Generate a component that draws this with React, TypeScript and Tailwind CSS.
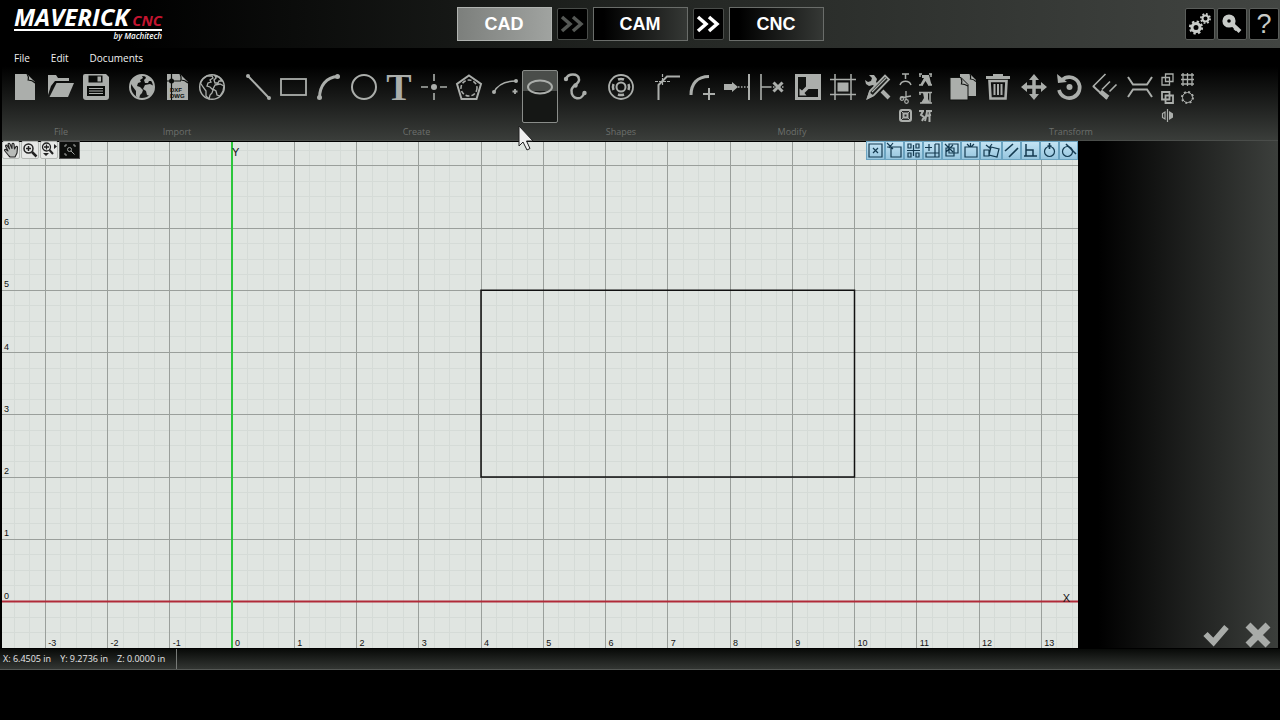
import type { ReactNode } from "react";

const UNIT = 62.25;
const ORIGIN = { x: 230, y: 459.5 };

const range = (from: number, to: number) => Array.from({ length: to - from + 1 }, (_, i) => from + i);
const toX = (units: number) => ORIGIN.x + units * UNIT;
const toY = (units: number) => ORIGIN.y - units * UNIT;

type Tool = { name: string; icon: ReactNode; active?: boolean };
type Group = { label: string; width: string; tools: Tool[]; small?: Tool[] };

function Glyph({ children, size = 26 }: { children: ReactNode; size?: number }) {
    return (
        <svg
            width={size}
            height={size}
            viewBox={`0 0 ${size} ${size}`}
            fill="none"
            stroke="currentColor"
            strokeWidth="2"
            className="shrink-0 overflow-visible"
            aria-hidden="true"
        >
            {children}
        </svg>
    );
}

const solid = { fill: "currentColor", stroke: "none" };

const continents =
    "M4 5l4-3 5 0 1 2-3 2 1 2-3 1-1 3 3 1 3 3-1 3-2 2-1 4-3-3v-5L4 13 1.500 9zM16 2l4 1 3 4-3 0-1 2-3 0-1-3 2-2zM16 11l5-1 4 2-1 5-3 5-3-1-1-4-3-2z";

const fileTools: Tool[] = [
    {
        name: "New",
        icon: (
            <Glyph>
                <path {...solid} d="M2 0h12l8 8v18H2z" />
                <path d="M14 0c1.500 2 1.800 4 1.200 6 2.500 0 4.800.8 7 3" stroke="#0a0c0a" strokeWidth="1.200" />
            </Glyph>
        ),
    },
    {
        name: "Open",
        icon: (
            <Glyph>
                <path {...solid} d="M0 1h8l2 3h11v3H7L3 12 0 21z" />
                <path {...solid} d="M8.500 9H26L20 23H1.500z" />
            </Glyph>
        ),
    },
    {
        name: "Save",
        icon: (
            <Glyph>
                <path {...solid} d="M2 0h21l3 3v20q0 3-3 3H3q-3 0-3-3V2q0-2 2-2z" />
                <path d="M5.500 1.500h14v7h-14z" fill="#0a0c0a" stroke="none" />
                <path {...solid} d="M14.500 2.500h3.500v5h-3.500z" />
                <path d="M4 12h18v10H4z" fill="#0a0c0a" stroke="none" />
                <path d="M6 14.500h14M6 17h14M6 19.500h14" strokeWidth="1.200" />
            </Glyph>
        ),
    },
];

const importTools: Tool[] = [
    {
        name: "Import from web",
        icon: (
            <Glyph>
                <circle cx="13" cy="13" r="12" />
                <path {...solid} d={continents} />
            </Glyph>
        ),
    },
    {
        name: "Import DXF or DWG",
        icon: (
            <Glyph>
                <path {...solid} d="M3 0h13l8 8v18H3z" />
                <path d="M16 0c1 2 1.500 4 1 6 2.500 0 5 1 7 3M7.500 0v26M3 7h14" stroke="#0a0c0a" strokeWidth="1.200" />
                <circle cx="7.500" cy="7" r="2.500" fill="#0a0c0a" stroke="none" />
                <g fill="#0a0c0a" stroke="none" fontFamily="Liberation Sans, sans-serif" fontWeight="700" fontSize="6">
                    <text x="6" y="18">DXF</text>
                    <text x="6" y="24">DWG</text>
                </g>
            </Glyph>
        ),
    },
    {
        name: "Import map",
        icon: (
            <Glyph>
                <circle cx="13" cy="13" r="12.300" strokeWidth="1.500" />
                <path d={continents} strokeWidth="1.300" />
            </Glyph>
        ),
    },
];

const createTools: Tool[] = [
    {
        name: "Line",
        icon: (
            <Glyph>
                <path d="M3 2l21 22" />
                <circle {...solid} cx="3" cy="2" r="2" />
                <circle {...solid} cx="24" cy="24" r="2" />
            </Glyph>
        ),
    },
    {
        name: "Rectangle",
        icon: (
            <Glyph>
                <rect x="1" y="5" width="25" height="16" strokeWidth="1.800" />
            </Glyph>
        ),
    },
    {
        name: "Arc",
        icon: (
            <Glyph>
                <path d="M4.500 24C4.500 12 11 3 23 2.500" strokeWidth="3" />
                <circle {...solid} cx="4.500" cy="23.500" r="2.500" />
                <circle {...solid} cx="22.500" cy="2.500" r="2.500" />
            </Glyph>
        ),
    },
    {
        name: "Circle",
        icon: (
            <Glyph>
                <circle cx="13" cy="13" r="12" />
            </Glyph>
        ),
    },
    {
        name: "Text",
        icon: <span className="flex h-[26px] items-center font-['Liberation_Serif',serif] text-[38px] leading-[38px] font-bold">T</span>,
    },
    {
        name: "Point",
        icon: (
            <Glyph>
                <circle {...solid} cx="13" cy="13" r="3" />
                <path d="M13 0v7M13 19v7M0 13h7M19 13h7" strokeWidth="1.600" />
            </Glyph>
        ),
    },
    {
        name: "Polygon",
        icon: (
            <Glyph>
                <path d="M13 1.500L25 10l-4.500 15h-15L1 10z" />
                <circle cx="13" cy="14" r="8" strokeWidth="1.500" strokeDasharray="4 2" />
            </Glyph>
        ),
    },
    {
        name: "Three point arc",
        icon: (
            <Glyph>
                <path d="M2 18C6 10 14 7 24 7" strokeWidth="1.500" />
                <circle {...solid} cx="2" cy="18" r="2" />
                <circle {...solid} cx="24" cy="7" r="2" />
                <path d="M23 15v5M20.500 17.500h5" strokeWidth="1.800" />
            </Glyph>
        ),
    },
    {
        name: "Ellipse",
        active: true,
        icon: (
            <Glyph>
                <ellipse cx="13" cy="13" rx="12" ry="6.500" />
            </Glyph>
        ),
    },
    {
        name: "Spline",
        icon: (
            <Glyph>
                <path d="M4 5C6-1 16-1 17 5c1 5-7 6-7.500 11C9 26 20 27 22 19" strokeWidth="2.500" />
                <circle {...solid} cx="4" cy="5" r="2.200" />
                <circle {...solid} cx="13.500" cy="11.500" r="2.200" />
                <circle {...solid} cx="22.500" cy="19" r="2.200" />
            </Glyph>
        ),
    },
];

const shapeTools: Tool[] = [
    {
        name: "Shape library",
        icon: (
            <Glyph>
                <circle cx="13" cy="13" r="12" strokeWidth="1.800" />
                <circle cx="13" cy="13" r="4.500" />
                <path
                    d="M10 5.500a8 8 0 0 1 6 0M10 20.500a8 8 0 0 0 6 0M5.500 10a8 8 0 0 0 0 6M20.500 10a8 8 0 0 1 0 6"
                    strokeWidth="2.500"
                />
            </Glyph>
        ),
    },
];

const modifyTools: Tool[] = [
    {
        name: "Chamfer",
        icon: (
            <Glyph>
                <path d="M26 2.500H13L4.500 11v15" />
                <path d="M8.500 0v11M1 7.500h15" strokeWidth="1.200" strokeDasharray="3 1" />
            </Glyph>
        ),
    },
    {
        name: "Fillet",
        icon: (
            <Glyph>
                <path d="M2 21C2 10 8 2.500 20 2.500" strokeWidth="3" />
                <path d="M20 14v12M14 20h12" />
            </Glyph>
        ),
    },
    {
        name: "Extend",
        icon: (
            <Glyph>
                <path {...solid} d="M0 10h8V8l6 5-6 5v-2H0z" />
                <path d="M14 13h10" strokeDasharray="1.500 1.500" strokeWidth="1.500" />
                <path d="M25 0v26" />
            </Glyph>
        ),
    },
    {
        name: "Trim",
        icon: (
            <Glyph>
                <path d="M2 0v26M2 13h9" strokeWidth="1.600" />
                <path d="M14.500 8.500l9 9M23.500 8.500l-9 9" strokeWidth="3" />
                <path d="M11 13h15" strokeDasharray="1.500 1.500" strokeWidth="1.500" />
            </Glyph>
        ),
    },
    {
        name: "Scale",
        icon: (
            <Glyph>
                <path {...solid} d="M0 0h26v26H0z" />
                <path d="M3 3h8v12h12v8H3z" fill="#111311" stroke="none" />
                <path {...solid} d="M4.500 21.500v-7l2.500 2 4-4 2.500 2.500-4 4 2 2.500z" />
            </Glyph>
        ),
    },
    {
        name: "Trim to region",
        icon: (
            <Glyph>
                <path d="M5 0v26M21 0v26M0 5.500h26M0 20.500h26" strokeWidth="1.500" />
                <path {...solid} d="M7.500 8.500h11v9h-11z" />
            </Glyph>
        ),
    },
    {
        name: "Edit geometry",
        icon: (
            <Glyph>
                <path {...solid} d="M0 6l3 2 3-1 1-3-3-3 5 0 3 4-1 3 3 3-3 3-3-3-4 1-3-2z" />
                <path d="M17 17l7 7" strokeWidth="4" />
                <path d="M3 24l2-7L20 1.500l4 4L9 21z" fill="#1a1c1a" strokeWidth="1.800" />
                <path d="M7 18L21 4" strokeWidth="1.200" />
                <path {...solid} d="M1 26l3-8 5 4z" />
            </Glyph>
        ),
    },
];

const modifySmall: Tool[] = [
    {
        name: "Break",
        icon: (
            <Glyph size={13}>
                <path d="M3 1h7M6.500 1v5M1 12c2-5 9-5 11 0" strokeWidth="1.500" />
            </Glyph>
        ),
    },
    {
        name: "Text on path",
        icon: (
            <Glyph size={13}>
                <path d="M0 1h3M10 1h3M0 12h4M9 12h4M1 1v3M12 1v3" strokeWidth="1.500" />
                <path {...solid} d="M3 2h7l2 8 1 2H9L6.500 8 4 12H1l4-7H3z" />
            </Glyph>
        ),
    },
    {
        name: "Cut",
        icon: (
            <Glyph size={13}>
                <path d="M7 0v9M1 7l11-2" strokeWidth="1.300" />
                <circle cx="3" cy="7.500" r="1.800" strokeWidth="1.200" />
                <circle cx="7.500" cy="10.500" r="1.800" strokeWidth="1.200" />
            </Glyph>
        ),
    },
    {
        name: "Text to outline",
        icon: (
            <Glyph size={13}>
                <path d="M0 1.500h13M1 1v3M11 1v11M1 12h12" strokeWidth="1.500" />
                <path {...solid} d="M4 2h5v6l2 4H2l3-5z" />
            </Glyph>
        ),
    },
    {
        name: "Offset",
        icon: (
            <Glyph size={13}>
                <rect x="1" y="1" width="11" height="11" rx="2" />
                <rect x="4.500" y="4.500" width="4" height="4" />
                <path d="M1 1l3 3M12 1L9 4M1 12l3-3M12 12L9 9" strokeWidth="1" />
            </Glyph>
        ),
    },
    {
        name: "Split text",
        icon: (
            <Glyph size={13}>
                <path d="M0 2h5M7 2h6M4 2l-2 4 3 2-2 4M8 3L6 12M10.500 3v10M7 7l5-1" />
            </Glyph>
        ),
    },
];

const transformTools: Tool[] = [
    {
        name: "Copy",
        icon: (
            <Glyph>
                <path {...solid} d="M10 0h10l6 6v16H10z" />
                <path d="M20 0c1 2 1 3 .5 5 2 0 4 1 5.500 2.500" stroke="#111311" strokeWidth="1.200" />
                <path d="M0 3.500h11l7 7V26H0z" fill="currentColor" stroke="#111311" strokeWidth="1" />
                <path d="M11 4c1 2 1 4 .5 6 2 0 4 .5 6.500 2" stroke="#111311" strokeWidth="1.200" />
            </Glyph>
        ),
    },
    {
        name: "Delete",
        icon: (
            <Glyph>
                <path d="M1 3.500h24" strokeWidth="3" />
                <path d="M9 2V1h8v1" />
                <path d="M4.500 7l1 17.500h15L21.500 7z" strokeWidth="2.600" />
                <path d="M9.500 10v11M13 10v11M16.500 10v11" />
            </Glyph>
        ),
    },
    {
        name: "Move",
        icon: (
            <Glyph>
                <path d="M13 3v20M3 13h20" strokeWidth="3.500" />
                <path {...solid} d="M13 0l5 6H8zM13 26l5-6H8zM0 13l6-5v10zM26 13l-6-5v10z" />
            </Glyph>
        ),
    },
    {
        name: "Rotate",
        icon: (
            <Glyph>
                <path d="M6 6A10.500 10.500 0 1 1 3 16" strokeWidth="3.600" />
                <path {...solid} d="M1 0l1 9 9-1z" />
                <circle {...solid} cx="13.500" cy="13" r="3" />
            </Glyph>
        ),
    },
    {
        name: "Align",
        icon: (
            <Glyph>
                <path d="M1 12.500L13.500 0M10 15.500l8-8M17.500 17.500l7-7" strokeWidth="1.600" />
                <path d="M1 12l14 13" strokeWidth="2" />
                <path d="M8.500 17.500l7.500 6" strokeWidth="4.500" />
            </Glyph>
        ),
    },
    {
        name: "Mirror",
        icon: (
            <Glyph>
                <path d="M1 3l5 7.500h14L25 3M1 23l5-7.500h14l5 7.500" />
            </Glyph>
        ),
    },
];

const transformSmall: Tool[] = [
    {
        name: "Group",
        icon: (
            <Glyph size={13}>
                <path d="M4.500 1h7.500v7.500H4.500zM1 4.500h7.500V12H1z" strokeWidth="1.300" />
            </Glyph>
        ),
    },
    {
        name: "Grid array",
        icon: (
            <Glyph size={13}>
                <path d="M0 2h13M0 6.500h13M0 11h13M2 0v13M6.500 0v13M11 0v13" strokeWidth="1.300" />
            </Glyph>
        ),
    },
    {
        name: "Ungroup",
        icon: (
            <Glyph size={13}>
                <path d="M4.500 4.500H12V12H4.500zM1 1h7.500v7.500H1z" strokeWidth="1.800" />
            </Glyph>
        ),
    },
    {
        name: "Circular array",
        icon: (
            <Glyph size={13}>
                <circle cx="6.500" cy="6.500" r="5" strokeWidth="1" />
                <circle cx="6.500" cy="6.500" r="5.500" strokeWidth="2" strokeDasharray="2 2.320" />
            </Glyph>
        ),
    },
    {
        name: "Flip",
        icon: (
            <Glyph size={13}>
                <path d="M6.500 0v13M4 3v7L1.500 8.500v-4z" strokeWidth="1.200" />
                <path {...solid} d="M8 2l4 2.500v4L8 11z" />
            </Glyph>
        ),
    },
];

const groups: Group[] = [
    { label: "File", width: "w-[106px]", tools: fileTools },
    { label: "Import", width: "w-[106px]", tools: importTools },
    { label: "Create", width: "w-[353px]", tools: createTools },
    { label: "Shapes", width: "w-[36px]", tools: shapeTools },
    { label: "Modify", width: "w-[286px]", tools: modifyTools, small: modifySmall },
    { label: "Transform", width: "w-[252px]", tools: transformTools, small: transformSmall },
];

const snaps: Tool[] = [
    { name: "Snap to center", icon: <path d="M2 2h13v13H2zM6 6l5 5M11 6l-5 5" /> },
    { name: "Snap to corner", icon: <path d="M5 5h10v10H5zM1 1l6 6M7 1L3 6M1 5h4" /> },
    { name: "Snap to grid", icon: <path d="M3 2h3v4H3zM11 2h3v4h-3zM3 11h3v4H3zM11 11h3v4h-3zM8.500 3v11M2 8.500h13" /> },
    { name: "Snap to endpoint", icon: <path d="M5 2v7M1 5.500h7M11 2h4v13H2v-4h13M11 2v13" /> },
    { name: "Snap to intersection", icon: <path d="M6 2h9v9H6zM3 6h8v8H3zM2 2l8 8M10 3l-7 7" /> },
    { name: "Snap to midpoint", icon: <path d="M3 5h12v10H3zM5 2l3 3M12 2L9 5M8.500 1v4" /> },
    { name: "Snap to object", icon: <path d="M1 8h5v6H1zM8 5l8 2-2 8-8-2zM3 3l5 4M9 2L6 6" /> },
    { name: "Snap parallel", icon: <path d="M2 9l8-7M6 15l9-9" strokeWidth="1.600" /> },
    { name: "Snap perpendicular", icon: <path d="M4 2v12M2 14h13M4 8h7v6" strokeWidth="1.500" /> },
    {
        name: "Snap to quadrant",
        icon: (
            <>
                <circle cx="8.500" cy="9.500" r="5" />
                <path d="M8.500 1v6M6.500 4h4" strokeWidth="1.600" />
            </>
        ),
    },
    {
        name: "Snap tangent",
        icon: (
            <>
                <circle cx="7.500" cy="9.500" r="5" />
                <path d="M6 2l10 10" strokeWidth="1.500" />
            </>
        ),
    },
];

function StageArrow({ label, className }: { label: string; className: string }) {
    return (
        <button
            aria-label={label}
            className={`flex h-8 w-[31px] items-center justify-center rounded-xs border border-[#4a4d4a] bg-black ${className}`}
        >
            <svg width="24" height="20" viewBox="0 0 24 20" fill="none" stroke="currentColor" strokeWidth="3.500" aria-hidden="true">
                <path d="M2 3l8 7-8 7M13 3l8 7-8 7" />
            </svg>
        </button>
    );
}

function StageButton({ label, active }: { label: string; active?: boolean }) {
    return (
        <button
            className={`h-[34px] w-[95px] border text-lg font-bold text-white ${
                active
                    ? "border-[#b0b3b0] bg-linear-to-r/srgb from-[#7c7f7c] to-[#a0a3a0]"
                    : "border-[#6a6d6a] bg-linear-to-r/srgb from-black from-10% to-[#353835]"
            }`}
        >
            {label}
        </button>
    );
}

function HeaderBar() {
    const square = "flex h-8 w-[30px] items-center justify-center rounded-xs border border-[#5a5d5a] bg-black";
    return (
        <header className="grid h-12 grid-cols-[1fr_auto_1fr] items-center bg-linear-to-r/srgb from-black from-10% via-[#222522] via-50% to-[#424542]">
            <div className="ml-3.5 w-[148px] self-start pt-1.5 font-['Open_Sans',sans-serif] italic">
                <div className="flex h-[25px] items-baseline justify-between border-b-2 border-white font-bold whitespace-nowrap">
                    <span className="text-2xl leading-[22px] text-white">MAVERICK</span>
                    <span className="text-[15px] leading-[22px] text-[#c41530]">CNC</span>
                </div>
                <div className="text-right text-[8px] leading-[10px] font-semibold text-white">by Machitech</div>
            </div>
            <nav className="flex items-center gap-[5px]" aria-label="Stages">
                <StageButton label="CAD" active />
                <StageArrow label="CAD to CAM" className="text-[#555855]" />
                <StageButton label="CAM" />
                <StageArrow label="CAM to CNC" className="text-white" />
                <StageButton label="CNC" />
            </nav>
            <div className="flex justify-end gap-0.5 pr-px text-[#c8cbc8]">
                <button aria-label="Settings" className={square}>
                    <svg width="24" height="24" viewBox="0 0 24 24" fill="none" stroke="currentColor" aria-hidden="true">
                        <circle cx="8" cy="15.500" r="4" strokeWidth="3" />
                        <circle cx="8" cy="15.500" r="6" strokeWidth="2.200" strokeDasharray="2.350 2.350" />
                        <circle cx="17.500" cy="6.500" r="3" strokeWidth="2" />
                        <circle cx="17.500" cy="6.500" r="4.600" strokeWidth="1.800" strokeDasharray="1.800 1.800" />
                    </svg>
                </button>
                <button aria-label="License" className={square}>
                    <svg width="22" height="22" viewBox="0 0 22 22" fill="none" stroke="currentColor" aria-hidden="true">
                        <circle cx="8" cy="8" r="4.200" strokeWidth="4.800" />
                        <path d="M11 11l8 7.500" strokeWidth="4" />
                        <path d="M13.500 17l3-3" strokeWidth="3" />
                    </svg>
                </button>
                <button aria-label="Help" className={`${square} text-[27px] leading-7`}>
                    ?
                </button>
            </div>
        </header>
    );
}

function Ribbon() {
    return (
        <div className="mx-0.5 border-b border-[#4a4d4a] bg-linear-to-b/srgb from-black from-20% to-[#3a3d3a] font-['Open_Sans',sans-serif]">
            <div className="flex h-[22px] items-start gap-[21px] pl-3 text-[10px] leading-5 text-[#f0f0f0]">
                <button>File</button>
                <button>Edit</button>
                <button>Documents</button>
            </div>
            <div className="flex gap-2.5 pl-1.5 text-[#abaeab]">
                {groups.map((group) => (
                    <section key={group.label} className={`${group.width} shrink-0`}>
                        <div className="flex h-[53px]">
                            {group.tools.map((tool) => (
                                <button
                                    key={tool.name}
                                    aria-label={tool.name}
                                    aria-pressed={tool.active}
                                    className={`flex h-[53px] min-w-0 flex-1 items-start justify-center rounded-xs border pt-[3px] ${
                                        tool.active
                                            ? "border-[#8a8d8a] bg-linear-to-b/srgb from-[#4a4d4a] from-40% to-[#151715] to-40%"
                                            : "border-transparent"
                                    }`}
                                >
                                    {tool.icon}
                                </button>
                            ))}
                            {group.small && (
                                <div className="grid w-[39px] grid-cols-2 content-start">
                                    {group.small.map((tool) => (
                                        <button
                                            key={tool.name}
                                            aria-label={tool.name}
                                            className="flex h-[18px] items-center justify-center"
                                        >
                                            {tool.icon}
                                        </button>
                                    ))}
                                </div>
                            )}
                        </div>
                        <h2 className="text-center text-[9px] leading-[17px] text-[#6c6f6c]">{group.label}</h2>
                    </section>
                ))}
            </div>
        </div>
    );
}

function ViewTools() {
    const light = "flex h-[18px] w-[18px] items-center justify-center rounded-xs border border-[#b5b8b5] bg-[#e6e8e6] text-[#222]";
    return (
        <div className="absolute top-0 left-0 flex gap-px">
            <button aria-label="Pan" className={light}>
                <svg width="16" height="16" viewBox="0 0 16 16" fill="#b8bbb8" stroke="currentColor" strokeWidth="1.100" strokeLinejoin="round" aria-hidden="true">
                    <path d="M6 14L1.500 8.500q0-1.500 1.500-1L5 9 2.500 4q.5-1.500 1.500-.5L6.500 7 5 2q1-1.500 2 0l2 4.500L9 2q1-1.300 2 0l.5 5L13 4.500q1.500-.5 1.500 1L14 11l-2 4H7z" />
                </svg>
            </button>
            <button aria-label="Zoom" className={light}>
                <svg width="16" height="16" viewBox="0 0 16 16" fill="none" stroke="currentColor" strokeWidth="1.500" aria-hidden="true">
                    <circle cx="6.500" cy="6.500" r="4.500" />
                    <path d="M4 6.500h5M6.500 4v5" />
                    <path d="M10 10l4.500 4.500" strokeWidth="2.500" />
                </svg>
            </button>
            <button aria-label="Zoom window" className={light}>
                <svg width="16" height="16" viewBox="0 0 16 16" fill="none" stroke="currentColor" strokeWidth="1.300" aria-hidden="true">
                    <circle cx="5.500" cy="5" r="4" />
                    <path d="M3 5h5M5.500 2.500v5" />
                    <path d="M8.500 8l3.500 4" strokeWidth="2" />
                    <path d="M13 2l3 2.500-3 2.500zM2 11h6l-3 3z" fill="currentColor" stroke="none" />
                </svg>
            </button>
            <button aria-label="Zoom extents" className="flex h-[18px] w-[21px] items-center justify-center border border-[#555] bg-[#0c0e0c] text-[#a0a3a0]">
                <svg width="14" height="14" viewBox="0 0 14 14" fill="none" stroke="currentColor" strokeWidth="1" aria-hidden="true">
                    <path d="M2 4V2h2M10 2h2v2M2 10v2h2" />
                    <circle cx="6.500" cy="6.500" r="2" />
                    <path d="M8 8l3.500 3.500" />
                </svg>
            </button>
        </div>
    );
}

function SnapBar() {
    return (
        <div className="absolute top-0 right-0 flex">
            {snaps.map((snap) => (
                <button
                    key={snap.name}
                    aria-label={snap.name}
                    className="flex h-[19px] w-[19px] items-center justify-center border border-[#6ba3c0] bg-linear-to-b/srgb from-[#c4e4f4] to-[#96c5de] text-[#143a50] nth-7:w-[22px]"
                >
                    <svg width="17" height="17" viewBox="0 0 17 17" fill="none" stroke="currentColor" strokeWidth="1.200" className="shrink-0" aria-hidden="true">
                        {snap.icon}
                    </svg>
                </button>
            ))}
        </div>
    );
}

function Drawing() {
    return (
        <svg className="block h-[506px] w-full bg-[#e0e5e1]" role="img" aria-label="Drawing area">
            <g stroke="#d5dbd7" strokeWidth="1" shapeRendering="crispEdges">
                {range(-15, 120).map((n) => (
                    <line key={`x${n}`} x1={toX(n / 4)} x2={toX(n / 4)} y1="0" y2="100%" />
                ))}
                {range(-3, 30).map((n) => (
                    <line key={`y${n}`} x1="0" x2="100%" y1={toY(n / 4)} y2={toY(n / 4)} />
                ))}
            </g>
            <g stroke="#9a9f9b" strokeWidth="1" shapeRendering="crispEdges">
                {range(-3, 30).map((n) => (
                    <line key={`x${n}`} x1={toX(n)} x2={toX(n)} y1="0" y2="100%" />
                ))}
                {range(0, 7).map((n) => (
                    <line key={`y${n}`} x1="0" x2="100%" y1={toY(n)} y2={toY(n)} />
                ))}
            </g>
            <line x1="0" x2="100%" y1={toY(0)} y2={toY(0)} stroke="#b02a38" strokeWidth="2" />
            <line x1={toX(0)} x2={toX(0)} y1="0" y2="100%" stroke="#2cc63c" strokeWidth="2" />
            <rect
                x={toX(4)}
                y={toY(5)}
                width={6 * UNIT}
                height={3 * UNIT}
                fill="none"
                stroke="#111"
                strokeWidth="1.500"
            />
            <g fill="#111" fontSize="9">
                {range(-3, 13).map((n) => (
                    <text key={`x${n}`} x={toX(n) + 3} y="504">{n}</text>
                ))}
                {range(0, 6).map((n) => (
                    <text key={`y${n}`} x="2" y={toY(n) - 3}>{n}</text>
                ))}
            </g>
            <g fill="#111" fontSize="11">
                <text x={toX(0)} y="14">Y</text>
                <text x="100%" dx="-8" y={toY(0)} textAnchor="end">X</text>
            </g>
        </svg>
    );
}

export default function App() {
    return (
        <div className="relative min-h-screen overflow-hidden bg-black font-['Liberation_Sans',sans-serif]">
            <HeaderBar />
            <Ribbon />
            <main className="mx-0.5 flex">
                <div className="relative min-w-0 flex-1 pt-px">
                    <Drawing />
                    <ViewTools />
                    <SnapBar />
                </div>
                <aside className="flex w-[200px] items-end justify-end gap-4 bg-linear-to-r/srgb from-black from-10% to-[#3c3f3c] pr-[7px] text-[#a8aba8]">
                    <button aria-label="Accept">
                        <svg width="26" height="26" viewBox="0 0 26 26" fill="none" stroke="currentColor" strokeWidth="6" aria-hidden="true">
                            <path d="M2.500 12l8 8L23.500 5" />
                        </svg>
                    </button>
                    <button aria-label="Cancel">
                        <svg width="26" height="26" viewBox="0 0 26 26" stroke="currentColor" strokeWidth="7" aria-hidden="true">
                            <path d="M3 3l20 20M23 3L3 23" />
                        </svg>
                    </button>
                </aside>
            </main>
            <footer className="mt-px flex h-[21px] items-center gap-[9px] border-b border-[#555855] bg-linear-to-b/srgb from-[#080a08] to-[#333633] pl-[3px] font-['Open_Sans',sans-serif] text-[9px] text-[#e8e8e8]">
                <span>X: 6.4505 in</span>
                <span>Y: 9.2736 in</span>
                <span>Z: 0.0000 in</span>
                <span className="ml-0.5 h-full w-px bg-[#777a77]" />
            </footer>
            <svg className="pointer-events-none absolute top-[125px] left-[518px]" width="16" height="27" viewBox="0 0 16 27" aria-hidden="true">
                <path d="M1 1v20l4-4 4 8 3-1.500-3.500-7.500H15z" fill="#f0f0f0" stroke="#222" strokeWidth="1" />
            </svg>
        </div>
    );
}
